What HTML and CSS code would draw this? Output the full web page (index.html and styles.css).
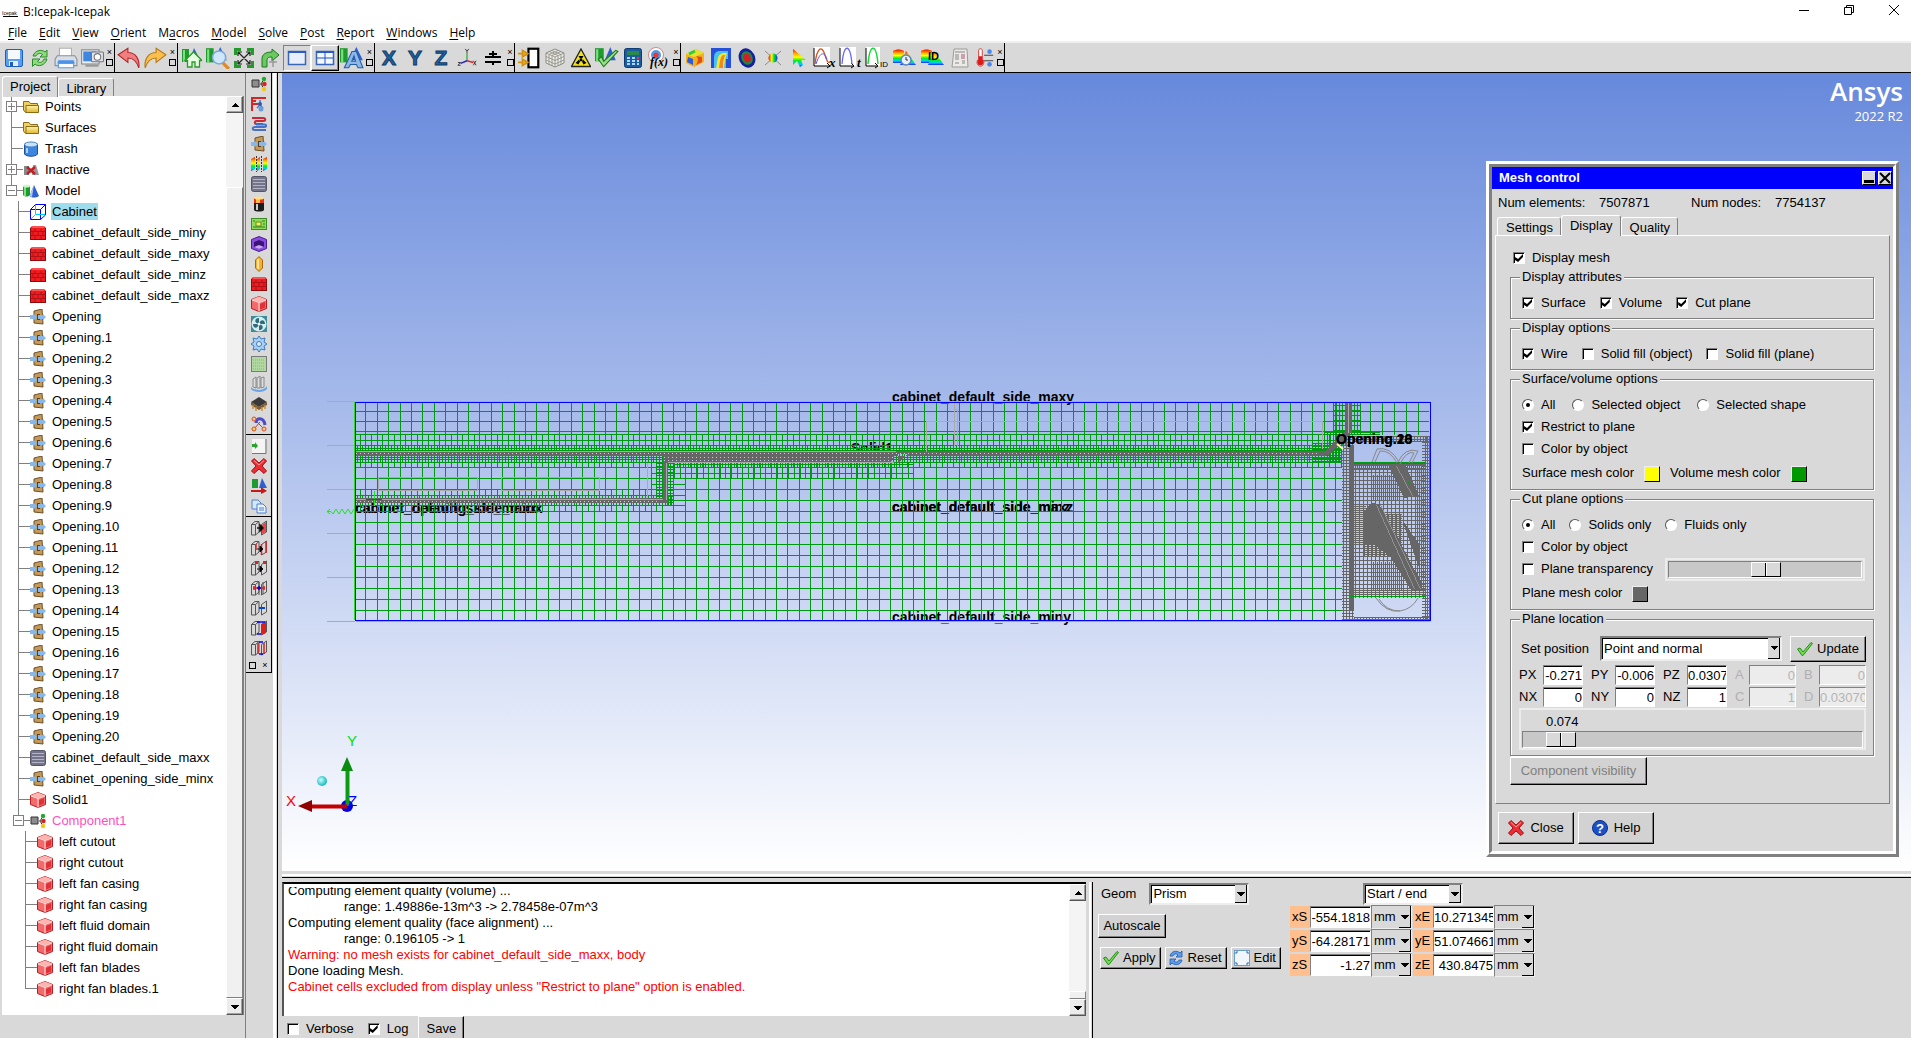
FILE: index.html
```html
<!DOCTYPE html>
<html lang="en">
<head>
<meta charset="utf-8">
<title>B:Icepak-Icepak</title>
<link rel="stylesheet" href="styles.css">
</head>
<body>
<svg class="defs" aria-hidden="true">
  <defs>
    <linearGradient id="g-rain" x1="0" y1="0" x2="0" y2="1"><stop offset="0" stop-color="#f00"/><stop offset=".25" stop-color="#fa0"/><stop offset=".45" stop-color="#ff0"/><stop offset=".65" stop-color="#0e2"/><stop offset=".85" stop-color="#0cf"/><stop offset="1" stop-color="#22f"/></linearGradient>
    <linearGradient id="g-rainx" x1="0" y1="0" x2="1" y2="0"><stop offset="0" stop-color="#f00"/><stop offset=".35" stop-color="#ff0"/><stop offset=".6" stop-color="#0e2"/><stop offset="1" stop-color="#22f"/></linearGradient>
    <linearGradient id="g-folder" x1="0" y1="0" x2="0" y2="1"><stop offset="0" stop-color="#fff3b0"/><stop offset="1" stop-color="#e0b52c"/></linearGradient>
    <radialGradient id="g-ball" cx=".4" cy=".4" r=".6"><stop offset="0" stop-color="#c8ffff"/><stop offset="1" stop-color="#18b8c0"/></radialGradient>
  </defs>

  <symbol id="i-save" viewBox="0 0 20 20"><rect x="1.500" y="1.500" width="17" height="17" rx="1.500" fill="#5b9df0" stroke="#1c5fc4"/><rect x="4" y="2" width="12" height="9" fill="#f4f8ff"/><rect x="5" y="13" width="9" height="5" fill="#e8eef8"/><rect x="6" y="14" width="3" height="4" fill="#1c5fc4"/></symbol>
  <symbol id="i-refresh" viewBox="0 0 20 20"><path d="M3 8C5 2 12 1 15 4L17 2V9H10L12.500 6.500C10 4.500 7 5.500 6 8Z" fill="#8cdc7c" stroke="#2a8a2a"/><path d="M17 11C15 18 8 19 5 16L2.500 18.500V11H10L7.500 13.500C10 15.500 13 14 14 11Z" fill="#8cdc7c" stroke="#2a8a2a"/></symbol>
  <symbol id="i-print" viewBox="0 0 22 20"><path d="M5 1H16V9H5Z" fill="#fff" stroke="#b0b0b0"/><path d="M3 8H19L21 11V17H1V11Z" fill="#d9dde4" stroke="#8b8f98"/><path d="M4 12H18L19 15H3Z" fill="#4a93e8"/><path d="M4 15H18V19H4Z" fill="#f8fbff" stroke="#5a9cec"/></symbol>
  <symbol id="i-camera" viewBox="0 0 22 20"><rect x="1.500" y="2.500" width="16" height="13" fill="#e8eef8" stroke="#888"/><rect x="3" y="4" width="12" height="9" fill="#3f86e0"/><rect x="10.500" y="4.500" width="11" height="9" rx="1" fill="#e2e4e8" stroke="#707680"/><circle cx="16" cy="9" r="3" fill="#fff" stroke="#777"/><path d="M5 17H17" stroke="#999" stroke-width="2"/></symbol>
  <symbol id="i-undo" viewBox="0 0 22 20"><path d="M1 7L10 1V5C17 5 21 11 20 19C18 13 15 10 10 10V14Z" fill="#f08080" stroke="#b02828"/></symbol>
  <symbol id="i-redo" viewBox="0 0 22 20"><path d="M21 7L12 1V5C5 5 1 11 2 19C4 13 7 10 12 10V14Z" fill="#fbc04c" stroke="#b87818"/></symbol>
  <symbol id="i-home" viewBox="0 0 20 20"><path d="M0 1V14H7V1Z" fill="#1e9a2e"/><path d="M2 2V14" stroke="#7ce07c" stroke-width="2"/><path d="M12 0L8 12H18Z" fill="#2f5fd0"/><path d="M3 12.500L11.500 4L20 12.500H17.500V19H13V14H10V19H5.500V12.500Z" fill="#e6ffe0" stroke="#2a9a2a" stroke-width="1.300"/></symbol>
  <symbol id="i-zoom" viewBox="0 0 22 20"><path d="M0 1V14H7V1Z" fill="#1e9a2e"/><path d="M2 2V14" stroke="#7ce07c" stroke-width="2"/><path d="M13 0L8 12H19Z" fill="#2f5fd0"/><path d="M15 14L21 20" stroke="#e08a28" stroke-width="3"/><circle cx="12" cy="9.500" r="6" fill="#cfe6fb" stroke="#7ca8d8" stroke-width="1.400"/></symbol>
  <symbol id="i-fit" viewBox="0 0 20 20"><path d="M0 7V0H7V3H3V7ZM13 0H20V7H17V3H13ZM0 13V20H7V17H3V13ZM20 13V20H13V17H17V13Z" fill="#249a2c"/><path d="M4 4L16 16M16 4L4 16M4 8V4H8M12 4H16V8M4 12V16H8M12 16H16V12" fill="none" stroke="#222" stroke-width="1.200"/></symbol>
  <symbol id="i-turn" viewBox="0 0 20 20"><path d="M2 19V11C2 6 6 4 12 4V1L19 7L12 13V9C8 9 7 10 7 13V19Z" fill="#6cc860" stroke="#1e7a1e"/><path d="M9 14H17M13 12V19" stroke="#999" stroke-width="1.500"/></symbol>
  <symbol id="i-win" viewBox="0 0 20 20"><rect x="1.500" y="3.500" width="17" height="13" fill="#e8eefa" stroke="#3a66b8" stroke-width="1.500"/><path d="M1 4H19" stroke="#2a5cc8" stroke-width="2"/></symbol>
  <symbol id="i-win4" viewBox="0 0 20 20"><rect x="1.500" y="3.500" width="17" height="13" fill="#f4f8ff" stroke="#3a66b8" stroke-width="1.500"/><path d="M1 4H19" stroke="#2a5cc8" stroke-width="2"/><path d="M10 4V16M2 10H18" stroke="#1e4fd0"/></symbol>
  <symbol id="i-modela" viewBox="0 0 22 20"><path d="M0 1V14H7V1Z" fill="#1e9a2e"/><path d="M2 2V14" stroke="#7ce07c" stroke-width="2"/><path d="M15 0L9 12H21Z" fill="#2f5fd0"/><path d="M11 4L4 19H8L9.500 16H15L16.500 19H21L15 4ZM12.800 8L14.300 13H10.800Z" fill="#8fb8e8" stroke="#2060a8"/></symbol>
  <symbol id="i-axes" viewBox="0 0 22 20"><path d="M11 13V5" stroke="#2a2" stroke-width="1.300"/><path d="M11 13L18 15" stroke="#e22" stroke-width="1.600"/><path d="M11 13L4 16" stroke="#22c" stroke-width="1.600"/><path d="M9 0L11 2.500L13 0M11 2.500V5M18 13L21 18M21 13L18 18M1 15H4L1 18H4" fill="none" stroke="#333"/></symbol>
  <symbol id="i-split" viewBox="0 0 20 20"><path d="M2 9H18M2 14H18M10 3V9M10 14V17M6 6H14" stroke="#000" stroke-width="2"/></symbol>
  <symbol id="i-plug" viewBox="0 0 22 20"><rect x="10.500" y="1.500" width="9" height="17" fill="#fff" stroke="#000" stroke-width="2"/><path d="M1 6H5M5 3V9L10 6ZM1 14H5M5 11V17L10 14Z" fill="#f0a818" stroke="#d09010" stroke-width="1.500"/></symbol>
  <symbol id="i-mesh" viewBox="0 0 20 20"><path d="M1 5L10 1L19 5V15L10 19L1 15Z" fill="#ecece6" stroke="#8c8c84"/><path d="M1 5L10 9L19 5M10 9V19M1 8.500L10 12.500L19 8.500M1 12L10 16L19 12M4 6.500V16.500M7 8V18M13 8V18M16 6.500V16.500M4 3.500L13 7.500M7 2.500L16 6.500M16 3.500L7 7.500M13 2.500L4 6.500" fill="none" stroke="#8c8c84" stroke-width=".8"/></symbol>
  <symbol id="i-rad" viewBox="0 0 20 20"><path d="M10 1L19.500 18.500H.5Z" fill="#f2e21c" stroke="#222" stroke-width="1.300"/><circle cx="10" cy="12" r="1.400"/><path d="M7.500 8H12.500L11 10.500H9ZM4.500 15L8 11.500L9 13.500L7.500 16.500ZM15.500 15L12 11.500L11 13.500L12.500 16.500Z"/></symbol>
  <symbol id="i-checkm" viewBox="0 0 22 20"><path d="M0 1V13H8V1Z" fill="#1e9a2e"/><path d="M2 2V13" stroke="#7ce07c" stroke-width="2"/><path d="M14 0L9 12H19Z" fill="#2f5fd0"/><path d="M3 11L8 18L21 4L19 3L8 13L6 9Z" fill="#9be08c" stroke="#1e7a1e"/></symbol>
  <symbol id="i-calc" viewBox="0 0 18 20"><rect x=".5" y=".5" width="17" height="19" rx="2" fill="#1c5c9c" stroke="#0c3c74"/><rect x="3" y="3" width="12" height="4" fill="#2a8a4a"/><path d="M3 10H6M8 10H11M3 13H6M8 13H11M3 16H6M8 16H11M13 13H15M13 16H15" stroke="#a8d8ff" stroke-width="2"/><path d="M13 10H15" stroke="#f33" stroke-width="2"/></symbol>
  <symbol id="i-fx" viewBox="0 0 24 22"><circle cx="9" cy="8" r="7.500" fill="#fff" stroke="#c88"/><circle cx="9" cy="8" r="5" fill="#4c9ce8"/><circle cx="9" cy="8" r="2.500" fill="#e33"/><text x="3" y="19" class="glyph-fx">f(x)</text></symbol>
  <symbol id="i-contour" viewBox="0 0 20 20"><path d="M1 6L11 1L19 5V14L9 19L1 15Z" fill="#f2b01c"/><path d="M3 9L8 11V17L2 14Z" fill="#2a5ce0"/><path d="M1 6L11 1L19 5L9 9Z" fill="#e8e030"/><path d="M11 8C14 10 13 14 11 17L17 14V9Z" fill="#e64a1c"/><path d="M4 6L10 3" stroke="#3c3" stroke-width="3"/></symbol>
  <symbol id="i-plane" viewBox="0 0 20 20"><rect width="20" height="20" fill="#2450dc"/><path d="M3 20V10C3 5 5 3 9 3H17V11H15V20Z" fill="#48c0f4"/><path d="M5 20C7 14 5 7 12 5H16L14 12L13 20Z" fill="#f0e830"/><path d="M8 20C9 14 9 9 12 7H14L12 14V20Z" fill="#f08a20"/></symbol>
  <symbol id="i-iso" viewBox="0 0 20 20"><ellipse cx="10" cy="10" rx="8" ry="10" transform="rotate(-25 10 10)" fill="#16209c"/><ellipse cx="10" cy="10" rx="5.500" ry="7" transform="rotate(-25 10 10)" fill="#1c8c3c"/><ellipse cx="10" cy="10" rx="3.500" ry="4.500" transform="rotate(-25 10 10)" fill="#d81c2c"/></symbol>
  <symbol id="i-point" viewBox="0 0 20 20"><path d="M2 3L18 17M18 3L2 17" stroke="#777" stroke-width=".8"/><circle cx="10" cy="10" r="4.500" fill="url(#g-rainx)"/></symbol>
  <symbol id="i-cursor" viewBox="0 0 20 20"><path d="M4 1V17L8 13L11 19L14 17L12 12H17Z" fill="url(#g-rain)"/></symbol>
  <symbol id="i-plotx" viewBox="0 0 24 22"><rect x="1" width="16" height="19" fill="#fff"/><path d="M1 1V19H17M14 16L17 19L14 21" fill="none" stroke="#000"/><path d="M2 17C4 0 9 -2 12 8S16 15 17 15" fill="none" stroke="#d4501c" stroke-width="1.300"/><path d="M3 17C6 8 10 2 14 12" fill="none" stroke="#55f"/><text x="16" y="20" class="glyph-plot">x</text></symbol>
  <symbol id="i-plott" viewBox="0 0 24 22"><rect x="1" width="16" height="19" fill="#fff"/><path d="M1 1V19H14M12 16L15 19L12 21" fill="none" stroke="#000"/><path d="M3 17C5 -4 11 -4 13 17" fill="none" stroke="#66f" stroke-width="1.300"/><text x="18" y="20" class="glyph-plot">t</text></symbol>
  <symbol id="i-ploti" viewBox="0 0 24 22"><rect x="1" width="14" height="19" fill="#fff"/><path d="M1 1V19H12M10 16L13 19L10 21" fill="none" stroke="#000"/><path d="M3 17C5 -4 11 -4 13 17" fill="none" stroke="#1d3" stroke-width="1.500"/><text x="15" y="20" class="glyph-id">ID</text></symbol>
  <symbol id="i-rtime" viewBox="0 0 24 20"><path d="M1 3C4 1 9 1 12 3V15H1Z" fill="url(#g-rain)"/><path d="M14 3L24 17H8Z" fill="url(#g-rain)"/><circle cx="14" cy="12" r="5" fill="#e4f0fc" stroke="#5a86b8" stroke-width="1.500"/><path d="M14 9V12H16" fill="none" stroke="#333"/></symbol>
  <symbol id="i-rid" viewBox="0 0 24 20"><path d="M1 3C4 1 9 1 12 3V15H1Z" fill="url(#g-rain)"/><path d="M14 3L24 17H8Z" fill="url(#g-rain)"/><text x="8" y="12" class="glyph-idb">ID</text></symbol>
  <symbol id="i-paper" viewBox="0 0 18 20"><path d="M3 1H16L17 19H1Z" fill="#eceae6" stroke="#9a9a98"/><path d="M4 4H14M4 7H8M4 9H8M4 11H8M11 13H14M11 15H14M4 15H8" stroke="#888"/><path d="M10 6H14V11H10Z" fill="#c8a0b0"/></symbol>
  <symbol id="i-thermo" viewBox="0 0 20 22"><path d="M3 3C3 0 7 0 7 3V12C10 14 9 20 5 20S0 14 3 12Z" fill="#fff" stroke="#c33"/><path d="M3 9H7V12C9 14 9 19 5 19S1 14 3 12Z" fill="#e01818"/><path d="M9 8H19M9 14H19" stroke="#444" stroke-width="1.300"/><circle cx="15" cy="4" r="2.500" fill="#4a8af0"/><circle cx="15" cy="18" r="2.500" fill="#4a8af0"/></symbol>

  <symbol id="i-folder" viewBox="0 0 16 16"><path d="M.5 2.500H6L7.500 4.500H14.500V13.500H2.500L.5 11Z" fill="#f0d060" stroke="#8a6c14"/><path d="M3 6.500H15.500V13.500H3Z" fill="url(#g-folder)" stroke="#8a6c14"/></symbol>
  <symbol id="i-trash" viewBox="0 0 16 16"><path d="M1.500 3V13C3 16 13 16 14.500 13V3Z" fill="#3c86e0" stroke="#1c50a0"/><ellipse cx="8" cy="3.500" rx="6.500" ry="2.500" fill="#c8e2fc" stroke="#4a84c8"/><path d="M4 7V12" stroke="#a8d4fc" stroke-width="2"/></symbol>
  <symbol id="i-inactive" viewBox="0 0 16 16"><path d="M1 4H6V13H1Z" fill="#888"/><path d="M10 3H13L16 13H9Z" fill="#999"/><path d="M4 5L12 12M12 5L4 12" stroke="#c41c24" stroke-width="2.500"/></symbol>
  <symbol id="i-modelt" viewBox="0 0 16 16"><path d="M0 3V12C2 14 5 14 7 12V3Z" fill="#1e9a2e"/><path d="M2 4V13" stroke="#7ce07c" stroke-width="2"/><ellipse cx="3.500" cy="3" rx="3.500" ry="1.500" fill="#c8f8c8"/><path d="M11 2L6.500 13C9 15 13 15 16 13Z" fill="#2f5fd0"/><path d="M11 2L9 14L6.500 13Z" fill="#a8c8fa"/></symbol>
  <symbol id="i-cabinet" viewBox="0 0 16 16"><path d="M.5 5.500H10.500V15.500H.5ZM.5 5.500L5.500 .5H15.500L10.500 5.500M15.500 .5V11L10.500 15.500" fill="none" stroke="#00f"/><path d="M5.500 1V10.500H15M5.500 10.500L1 15" fill="none" stroke="#0cf"/></symbol>
  <symbol id="i-wall" viewBox="0 0 16 16"><path d="M2 1H14L16 3V15H0V3Z" fill="#f01c20"/><path d="M0 6.500H16M0 10.500H16M5 4V6M11 4V6M3 7V10M8 7V10M13 7V10M5 11V14M11 11V14" stroke="#a01014" stroke-width=".8" fill="none"/><path d="M0 14.500H16M.5 3V15M15.500 3V15" stroke="#8c0c10" fill="none"/><path d="M2 2H14" stroke="#ff8a8a"/></symbol>
  <symbol id="i-opening" viewBox="0 0 16 16"><path d="M4 2L12 0L13 15L4 14Z" fill="#c49a5c" stroke="#6e4e22"/><path d="M7 5H10V11H7Z" fill="#5a4020"/><path d="M0 6H4V5L7 8L4 11V10H0ZM8 6H13V5L16 8L13 11V10H8Z" fill="#86b8ec"/></symbol>
  <symbol id="i-solid" viewBox="0 0 16 16"><path d="M.5 3.500L8 .5L15.500 3.500V12.500L8 15.500L.5 12.500Z" fill="#f26a6a" stroke="#b81c24"/><path d="M.5 3.500L8 6L15.500 3.500L8 .5Z" fill="#ffb4b0"/><path d="M8 6V15.500M1 4L8 6.500L15 4" fill="none" stroke="#ffe0e0"/><path d="M9 8L14 6V11.500L9 13.500Z" fill="#e03038"/></symbol>
  <symbol id="i-vent" viewBox="0 0 16 16"><rect x=".5" y=".5" width="15" height="15" rx="2" fill="#74748a" stroke="#55556a"/><path d="M2 3.500H14M2 6.500H14M2 9.500H14M2 12.500H14" stroke="#b4b4c4"/></symbol>
  <symbol id="i-assembly" viewBox="0 0 16 16"><path d="M1 4H8V11H1Z" fill="#8c8c8c" stroke="#333"/><path d="M9 8H11M14 3L11 6V10L14 13" fill="none" stroke="#333"/><circle cx="13" cy="3" r="2.200" fill="#1cac2c"/><circle cx="13.500" cy="8" r="2.200" fill="#e02020"/><circle cx="13" cy="13" r="2.200" fill="#f0c818"/></symbol>
  <symbol id="i-network" viewBox="0 0 16 16"><path d="M1 15V2H15M2 5H5M2 8H8" fill="none" stroke="#d82424" stroke-width="2"/><path d="M9 4V9M9 9L12 12M9 9L6 12" stroke="#4a7cc8" stroke-width="1.500"/><circle cx="9" cy="8" r="2" fill="#2a5cb0"/><circle cx="10" cy="13" r="2.500" fill="#6a9ce0"/></symbol>
  <symbol id="i-coil" viewBox="0 0 16 16"><path d="M1 2H12C15 2 15 5 12 5H6C3 5 3 8 6 8H12" fill="none" stroke="#c82838" stroke-width="2"/><path d="M5 8.500H13C16 8.500 16 11 13 11H4C1 11 1 14 4 14H15" fill="none" stroke="#4870c8" stroke-width="2"/></symbol>
  <symbol id="i-radiation" viewBox="0 0 16 16"><path d="M0 3L4 1V13L0 15ZM6 3L9 1V13L6 15ZM12 3L16 1V13L12 15Z" fill="url(#g-rain)"/><path d="M5.500 0V16M10.500 0V16" stroke="#333" stroke-dasharray="2 1"/></symbol>
  <symbol id="i-source" viewBox="0 0 16 16"><path d="M3 2V14C4 16 12 16 13 14V2Z" fill="#1c1c1c"/><path d="M3 2V7H13V2Z" fill="#e43418"/><path d="M5 2V7H9V2Z" fill="#ffc040"/><ellipse cx="8" cy="2" rx="5" ry="1.500" fill="#ffe088"/><path d="M6 8V14" stroke="#ccc" stroke-width="2"/></symbol>
  <symbol id="i-pcb" viewBox="0 0 16 16"><rect x=".5" y="2.500" width="15" height="11" fill="#8cdc5c" stroke="#3c8c20"/><rect x="5" y="6" width="5" height="4" fill="#e8f060" stroke="#688818"/><path d="M2 5H4M11 5H14M2 11H14M12 8H14" stroke="#347c1c"/></symbol>
  <symbol id="i-enclosure" viewBox="0 0 16 16"><path d="M.5 3.500L8 .5L15.500 3.500V12.500L8 15.500L.5 12.500Z" fill="#8a4ce0" stroke="#4c1c98"/><path d="M3 6L8 4L13 6V11L8 13L3 11Z" fill="#3c1478"/><path d="M3 11L8 9L13 11L8 13Z" fill="#c8a4f4"/></symbol>
  <symbol id="i-plate" viewBox="0 0 16 16"><path d="M8 .5L11.500 4V12L8 15.500L4.500 12V4Z" fill="#f8b030" stroke="#a86810"/><path d="M7 3V13" stroke="#ffe4a0" stroke-width="2"/></symbol>
  <symbol id="i-fan" viewBox="0 0 16 16"><rect width="16" height="16" fill="#3c8c98"/><circle cx="8" cy="8" r="7.500" fill="#d8ecf0"/><path d="M8 8C3 7 3 2 8 2ZM8 8C9 3 14 3 14 8ZM8 8C13 9 13 14 8 14ZM8 8C7 13 2 13 2 8Z" fill="#2c6c7c"/><circle cx="8" cy="8" r="1.500" fill="#fff"/></symbol>
  <symbol id="i-blower" viewBox="0 0 16 16"><path d="M8 0L10 3L14 2L13 6L16 8L13 10L14 14L10 13L8 16L6 13L2 14L3 10L0 8L3 6L2 2L6 3Z" fill="#a8d0f4" stroke="#3c7cc0"/><circle cx="8" cy="8" r="2.500" fill="#e8e8e8" stroke="#3c7cc0"/></symbol>
  <symbol id="i-resist" viewBox="0 0 16 16"><rect x=".5" y=".5" width="15" height="15" fill="#b0d8a0" stroke="#7a7a7a"/><path d="M2 4H14M2 7H14M2 10H14M2 13H14" stroke="#88b478" stroke-dasharray="1 1"/></symbol>
  <symbol id="i-sink" viewBox="0 0 16 16"><path d="M2 3L5 1V12L2 11ZM6 2L9 0V12H6ZM10 2L13 1V11L10 12Z" fill="#ddd" stroke="#888"/><path d="M0 11C3 15 13 15 16 10V13C13 17 3 17 0 13Z" fill="#6aa4e8"/></symbol>
  <symbol id="i-package" viewBox="0 0 16 16"><path d="M0 6L8 1L16 6L8 11Z" fill="#3a3a3a"/><path d="M0 6L8 11V14L0 9ZM16 6L8 11V14L16 9Z" fill="#7c5c30"/><path d="M2 9V13M5 11V15M11 11V15M14 9V13" stroke="#c8903c" stroke-width="1.500"/></symbol>
  <symbol id="i-tri" viewBox="0 0 16 16"><path d="M3 3L8 8L13 13M3 13L9 6" stroke="#c83c2c"/><path d="M5 7C5 1 13 1 14 9" fill="none" stroke="#4c4cc8" stroke-width="3"/><circle cx="3" cy="3" r="2" fill="#ffc8a0" stroke="#d84c20"/><circle cx="3" cy="13" r="2" fill="#ffd060" stroke="#d84c20"/><circle cx="13" cy="13" r="2" fill="#ffc8a0" stroke="#d84c20"/></symbol>
  <symbol id="i-new" viewBox="0 0 16 16"><path d="M1 1H14V15H1Z" fill="#f4f4f4"/><path d="M15 1V15.500H1" fill="none" stroke="#777"/><path d="M1 6H4V4L7 8L4 11V9H1Z" fill="#28a428"/></symbol>
  <symbol id="i-x" viewBox="0 0 16 16"><path d="M3 .5L8 5L13 .5L15.500 3L11 8L15.500 13L13 15.500L8 11L3 15.500L.5 13L5 8L.5 3Z" fill="#ee2c34" stroke="#a01018"/><path d="M3 2.500L8 7L13 2.500" fill="none" stroke="#ff9c98"/></symbol>
  <symbol id="i-move" viewBox="0 0 16 16"><path d="M1 1V10H7V1Z" fill="#1e9a2e"/><path d="M11 0L8 10H16Z" fill="#2f5fd0"/><path d="M0 12H10V9L16 13L10 16V14H0Z" fill="#c81818"/></symbol>
  <symbol id="i-copy" viewBox="0 0 16 16"><path d="M1 2H7L10 5V11H1Z" fill="#d8e8fc" stroke="#4c80c8"/><path d="M6 6H12L15 9V15H6Z" fill="#e8f2ff" stroke="#4c80c8"/><path d="M8 10H13M8 12H13" stroke="#4c80c8"/></symbol>
  <symbol id="i-box" viewBox="0 0 16 16"><path d="M.5 4.500L4 1.500H8V12L4.500 15H.5ZM4.500 4.500V15M.5 4.500H4.500L8 1.500M10.500 4.500L15.500 1V12L10.500 15Z" fill="#d8d8d8" stroke="#555"/></symbol>
  <symbol id="i-al1" viewBox="0 0 16 16"><use href="#i-box" width="16" height="16"/><path d="M11 5L15 2V12L11 14Z" fill="#e84848"/><path d="M6 8H10M9 5L12 8L9 11Z" stroke="#111" stroke-width="1.500"/></symbol>
  <symbol id="i-al2" viewBox="0 0 16 16"><use href="#i-box" width="16" height="16"/><path d="M15 1V13M10.500 4V15M5 4V10" stroke="#e02020" stroke-width="1.500"/><path d="M6 9H10M9 6L12 9L9 12Z" stroke="#111"/></symbol>
  <symbol id="i-al3" viewBox="0 0 16 16"><use href="#i-box" width="16" height="16"/><path d="M4 1H7V4H4ZM12 1H15V4H12Z" fill="#e02020"/><path d="M6 9H10M9 6L12 9L9 12Z" stroke="#111"/></symbol>
  <symbol id="i-al4" viewBox="0 0 16 16"><use href="#i-box" width="16" height="16"/><path d="M8 2V15M12 2V14" stroke="#555"/><path d="M2 8H14M3 6V10M13 6V10" stroke="#e02020" stroke-width="1.500"/><path d="M8 6V10M6 8H10" stroke="#00c" stroke-width="1.500"/></symbol>
  <symbol id="i-al5" viewBox="0 0 16 16"><use href="#i-box" width="16" height="16"/><path d="M8 8H14" stroke="#04d" stroke-width="2"/></symbol>
  <symbol id="i-al6" viewBox="0 0 16 16"><use href="#i-box" width="16" height="16"/><path d="M10 4L15 2V13L10 15Z" fill="#e01c1c"/><path d="M6 2H14M6 14H10" stroke="#00f" stroke-width="1.500"/></symbol>
  <symbol id="i-al7" viewBox="0 0 16 16"><use href="#i-box" width="16" height="16"/><path d="M7 3V14M13 3V14" stroke="#e01c1c" stroke-width="1.500"/><path d="M8 2H12M8 14H12" stroke="#00f" stroke-width="1.500"/></symbol>
  <symbol id="i-tick" viewBox="0 0 16 14"><path d="M.5 7L3 6L6 10L14 .5L15.500 1.500L6 13.500H5Z" fill="#6ce04c" stroke="#2a8a1c"/></symbol>
  <symbol id="i-help" viewBox="0 0 16 16"><circle cx="8" cy="8" r="7.500" fill="#1c50c8" stroke="#0c2c88"/><text x="8" y="13" text-anchor="middle" class="glyph-help">?</text></symbol>
  <symbol id="i-reset" viewBox="0 0 16 16"><path d="M2 6C3 1 9 0 12 3L14 1V7H8L10 5C8 3 6 4 5 6ZM14 10C13 15 7 16 4 13L2 15V9H8L6 11C8 13 10 12 11 10Z" fill="#5c9cec" stroke="#2058a8" stroke-width=".8"/></symbol>
  <symbol id="i-edit" viewBox="0 0 16 16"><rect x=".5" y=".5" width="15" height="15" fill="#f0f6fc" stroke="#6a9ccc"/><path d="M2 4V2H4M12 2H14V4M14 12V14H12M4 14H2V12" fill="none" stroke="#2a6cac"/></symbol>
</svg>

<header class="titlebar">
  <svg class="app-icon" width="20" height="12" aria-hidden="true"><text x="1" y="9" class="glyph-app">Icepak</text><path d="M2 10.500H17" stroke="#000"/></svg>
  <h1>B:Icepak-Icepak</h1>
  <div class="window-buttons">
    <button aria-label="Minimize"><svg width="10" height="10"><path d="M0 5.500H10" stroke="#000"/></svg></button>
    <button aria-label="Restore"><svg width="10" height="10"><path d="M.5 2.500H7.500V9.500H.5ZM2.500 2V.5H9.500V7.500H8" fill="none" stroke="#000"/></svg></button>
    <button aria-label="Close"><svg width="10" height="10"><path d="M0 0L10 10M10 0L0 10" stroke="#000"/></svg></button>
  </div>
</header>

<nav class="menubar">
  <button><u>F</u>ile</button><button><u>E</u>dit</button><button><u>V</u>iew</button><button><u>O</u>rient</button><button>M<u>a</u>cros</button><button><u>M</u>odel</button><button><u>S</u>olve</button><button><u>P</u>ost</button><button><u>R</u>eport</button><button><u>W</u>indows</button><button><u>H</u>elp</button>
</nav>

<div class="toolbar">
  <div class="tool-group">
    <button aria-label="Save"><svg><use href="#i-save"/></svg></button>
    <button aria-label="Refresh"><svg><use href="#i-refresh"/></svg></button>
    <button aria-label="Print"><svg class="big"><use href="#i-print"/></svg></button>
    <button aria-label="Capture image"><svg class="big"><use href="#i-camera"/></svg></button>
    <span class="grip loose"></span>
  </div>
  <div class="tool-group">
    <button aria-label="Undo"><svg class="big"><use href="#i-undo"/></svg></button>
    <button aria-label="Redo"><svg class="big"><use href="#i-redo"/></svg></button>
    <span class="grip loose"></span>
  </div>
  <div class="tool-group">
    <button aria-label="Home view"><svg><use href="#i-home"/></svg></button>
    <button aria-label="Zoom"><svg class="big"><use href="#i-zoom"/></svg></button>
    <button aria-label="Scale to fit"><svg><use href="#i-fit"/></svg></button>
    <button aria-label="Rotate"><svg><use href="#i-turn"/></svg></button>
    <button class="wide pressed" aria-label="One view"><svg><use href="#i-win"/></svg></button>
    <button class="wide raised" aria-label="Four views"><svg><use href="#i-win4"/></svg></button>
    <button aria-label="Object names"><svg class="big"><use href="#i-modela"/></svg></button>
    <span class="grip loose"></span>
  </div>
  <div class="tool-group">
    <button class="letter">X</button>
    <button class="letter">Y</button>
    <button class="letter">Z</button>
    <button aria-label="Isometric"><svg><use href="#i-axes"/></svg></button>
    <button aria-label="Reverse"><svg><use href="#i-split"/></svg></button>
    <span class="grip"></span>
  </div>
  <div class="tool-group">
    <button aria-label="Power and temperature"><svg class="big"><use href="#i-plug"/></svg></button>
    <button aria-label="Generate mesh"><svg><use href="#i-mesh"/></svg></button>
    <button aria-label="Radiation"><svg><use href="#i-rad"/></svg></button>
    <button aria-label="Check model"><svg class="big"><use href="#i-checkm"/></svg></button>
    <button aria-label="Run solution"><svg><use href="#i-calc"/></svg></button>
    <button aria-label="Optimization"><svg class="big"><use href="#i-fx"/></svg></button>
    <span class="grip"></span>
  </div>
  <div class="tool-group">
    <button aria-label="Object face"><svg><use href="#i-contour"/></svg></button>
    <button aria-label="Plane cut"><svg><use href="#i-plane"/></svg></button>
    <button aria-label="Isosurface"><svg><use href="#i-iso"/></svg></button>
    <button aria-label="Point"><svg><use href="#i-point"/></svg></button>
    <button aria-label="Surface probe"><svg><use href="#i-cursor"/></svg></button>
    <button aria-label="Variation plot"><svg class="big"><use href="#i-plotx"/></svg></button>
    <button aria-label="History plot"><svg class="big"><use href="#i-plott"/></svg></button>
    <button aria-label="Trials plot"><svg class="big"><use href="#i-ploti"/></svg></button>
    <button class="wide" aria-label="Transient settings"><svg class="big"><use href="#i-rtime"/></svg></button>
    <button class="wide" aria-label="Load solution ID"><svg class="big"><use href="#i-rid"/></svg></button>
    <button class="wide" aria-label="Summary report"><svg><use href="#i-paper"/></svg></button>
    <button class="narrow" aria-label="Power and temperature values"><svg><use href="#i-thermo"/></svg></button>
    <span class="grip"></span>
  </div>
</div>

<div class="workspace">
  <aside class="project">
    <div class="tabs" role="tablist">
      <button class="tab active" role="tab">Project</button><button class="tab" role="tab">Library</button>
    </div>
    <div class="tree-frame">
      <ul class="tree">
        <li><button class="knob plus" aria-label="Expand"></button><div class="row"><svg><use href="#i-folder"/></svg><span>Points</span></div></li>
        <li><div class="row"><svg><use href="#i-folder"/></svg><span>Surfaces</span></div></li>
        <li><div class="row"><svg><use href="#i-trash"/></svg><span>Trash</span></div></li>
        <li><button class="knob plus" aria-label="Expand"></button><div class="row"><svg><use href="#i-inactive"/></svg><span>Inactive</span></div></li>
        <li><button class="knob" aria-label="Collapse"></button><div class="row"><svg><use href="#i-modelt"/></svg><span>Model</span></div>
          <ul>
            <li><div class="row"><svg><use href="#i-cabinet"/></svg><span class="selected">Cabinet</span></div></li>
            <li><div class="row"><svg><use href="#i-wall"/></svg><span>cabinet_default_side_miny</span></div></li>
            <li><div class="row"><svg><use href="#i-wall"/></svg><span>cabinet_default_side_maxy</span></div></li>
            <li><div class="row"><svg><use href="#i-wall"/></svg><span>cabinet_default_side_minz</span></div></li>
            <li><div class="row"><svg><use href="#i-wall"/></svg><span>cabinet_default_side_maxz</span></div></li>
            <li><div class="row"><svg><use href="#i-opening"/></svg><span>Opening</span></div></li>
            <li><div class="row"><svg><use href="#i-opening"/></svg><span>Opening.1</span></div></li>
            <li><div class="row"><svg><use href="#i-opening"/></svg><span>Opening.2</span></div></li>
            <li><div class="row"><svg><use href="#i-opening"/></svg><span>Opening.3</span></div></li>
            <li><div class="row"><svg><use href="#i-opening"/></svg><span>Opening.4</span></div></li>
            <li><div class="row"><svg><use href="#i-opening"/></svg><span>Opening.5</span></div></li>
            <li><div class="row"><svg><use href="#i-opening"/></svg><span>Opening.6</span></div></li>
            <li><div class="row"><svg><use href="#i-opening"/></svg><span>Opening.7</span></div></li>
            <li><div class="row"><svg><use href="#i-opening"/></svg><span>Opening.8</span></div></li>
            <li><div class="row"><svg><use href="#i-opening"/></svg><span>Opening.9</span></div></li>
            <li><div class="row"><svg><use href="#i-opening"/></svg><span>Opening.10</span></div></li>
            <li><div class="row"><svg><use href="#i-opening"/></svg><span>Opening.11</span></div></li>
            <li><div class="row"><svg><use href="#i-opening"/></svg><span>Opening.12</span></div></li>
            <li><div class="row"><svg><use href="#i-opening"/></svg><span>Opening.13</span></div></li>
            <li><div class="row"><svg><use href="#i-opening"/></svg><span>Opening.14</span></div></li>
            <li><div class="row"><svg><use href="#i-opening"/></svg><span>Opening.15</span></div></li>
            <li><div class="row"><svg><use href="#i-opening"/></svg><span>Opening.16</span></div></li>
            <li><div class="row"><svg><use href="#i-opening"/></svg><span>Opening.17</span></div></li>
            <li><div class="row"><svg><use href="#i-opening"/></svg><span>Opening.18</span></div></li>
            <li><div class="row"><svg><use href="#i-opening"/></svg><span>Opening.19</span></div></li>
            <li><div class="row"><svg><use href="#i-opening"/></svg><span>Opening.20</span></div></li>
            <li><div class="row"><svg><use href="#i-vent"/></svg><span>cabinet_default_side_maxx</span></div></li>
            <li><div class="row"><svg><use href="#i-opening"/></svg><span>cabinet_opening_side_minx</span></div></li>
            <li><div class="row"><svg><use href="#i-solid"/></svg><span>Solid1</span></div></li>
            <li><button class="knob" aria-label="Collapse"></button><div class="row"><svg><use href="#i-assembly"/></svg><span class="pink">Component1</span></div>
              <ul>
                <li><div class="row"><svg><use href="#i-solid"/></svg><span>left cutout</span></div></li>
                <li><div class="row"><svg><use href="#i-solid"/></svg><span>right cutout</span></div></li>
                <li><div class="row"><svg><use href="#i-solid"/></svg><span>left fan casing</span></div></li>
                <li><div class="row"><svg><use href="#i-solid"/></svg><span>right fan casing</span></div></li>
                <li><div class="row"><svg><use href="#i-solid"/></svg><span>left fluid domain</span></div></li>
                <li><div class="row"><svg><use href="#i-solid"/></svg><span>right fluid domain</span></div></li>
                <li><div class="row"><svg><use href="#i-solid"/></svg><span>left fan blades</span></div></li>
                <li><div class="row"><svg><use href="#i-solid"/></svg><span>right fan blades.1</span></div></li>
              </ul>
            </li>
          </ul>
        </li>
      </ul>
      <div class="scrollbar"><button class="up" aria-label="Scroll up"></button><div class="trough tree-trough"><div class="thumb"></div></div><button class="down" aria-label="Scroll down"></button></div>
    </div>
  </aside>

  <div class="object-bar">
    <div class="object-tools">
      <div class="object-group">
        <button aria-label="Assembly"><svg><use href="#i-assembly"/></svg></button>
        <button aria-label="Network"><svg><use href="#i-network"/></svg></button>
        <button aria-label="Heat exchanger"><svg><use href="#i-coil"/></svg></button>
        <button aria-label="Opening"><svg><use href="#i-opening"/></svg></button>
        <button aria-label="Periodic boundary"><svg><use href="#i-radiation"/></svg></button>
        <button aria-label="Grille"><svg><use href="#i-vent"/></svg></button>
        <button aria-label="Source"><svg><use href="#i-source"/></svg></button>
        <button aria-label="Printed circuit board"><svg><use href="#i-pcb"/></svg></button>
        <button aria-label="Enclosure"><svg><use href="#i-enclosure"/></svg></button>
        <button aria-label="Plate"><svg><use href="#i-plate"/></svg></button>
        <button aria-label="Wall"><svg><use href="#i-wall"/></svg></button>
        <button aria-label="Block"><svg><use href="#i-solid"/></svg></button>
        <button aria-label="Fan"><svg><use href="#i-fan"/></svg></button>
        <button aria-label="Blower"><svg><use href="#i-blower"/></svg></button>
        <button aria-label="Resistance"><svg><use href="#i-resist"/></svg></button>
        <button aria-label="Heat sink"><svg><use href="#i-sink"/></svg></button>
        <button aria-label="Package"><svg><use href="#i-package"/></svg></button>
        <button aria-label="Materials"><svg><use href="#i-tri"/></svg></button>
      </div>
      <div class="object-group">
        <button aria-label="Edit object"><svg><use href="#i-new"/></svg></button>
        <button aria-label="Delete object"><svg><use href="#i-x"/></svg></button>
        <button aria-label="Move object"><svg><use href="#i-move"/></svg></button>
        <button aria-label="Copy object"><svg><use href="#i-copy"/></svg></button>
      </div>
      <div class="object-group">
        <button aria-label="Align faces"><svg><use href="#i-al1"/></svg></button>
        <button aria-label="Align edges"><svg><use href="#i-al2"/></svg></button>
        <button aria-label="Align vertices"><svg><use href="#i-al3"/></svg></button>
        <button aria-label="Align centers"><svg><use href="#i-al4"/></svg></button>
        <button aria-label="Align face centers"><svg><use href="#i-al5"/></svg></button>
        <button aria-label="Morph faces"><svg><use href="#i-al6"/></svg></button>
        <button aria-label="Morph edges"><svg><use href="#i-al7"/></svg></button>
        <span class="grip flat"></span>
      </div>
    </div>
  </div>
  <div class="vsplit"></div>

  <main class="main">
    <section class="viewport" aria-label="Graphics">
      <svg class="scene">
        <g transform="translate(-282 -73)">
          <path d="M327 401.500H355M327 445.500H355M327 489.500H355M327 533.500H355M327 577.500H355M327 621.500H355" stroke="#aaa"/>
          <g class="labels">
            <text x="892" y="402">cabinet_default_side_maxy</text>
            <text x="892" y="512">cabinet_default_side_minz</text>
            <text x="892" y="512">cabinet_default_side_maxz</text>
            <text x="892" y="622">cabinet_default_side_miny</text>
            <text x="355" y="513">cabinet_default_side_maxx</text>
            <text x="355" y="513">cabinet_opening_side_minx</text>
            <text x="851" y="453">Solid1</text>
          </g>
          <g id="mesh" shape-rendering="crispEdges"></g>
          <g fill="none" stroke="#aaa" shape-rendering="crispEdges">
            <path d="M378.500 477.500H477.500V490.500H378.500ZM501.500 477.500H599.500V490.500H501.500ZM647.500 463V497M356 401.500H1430M356 621.500H1430M926.500 452V421.500H1322.500V449M954.500 403V446M957.500 446V409.500H954"/>
          </g>
          <g fill="none" stroke="#888">
            <path d="M1372 462L1377 449Q1390 446 1399 462M1375 462L1380 451Q1390 450 1397 463M1398 462Q1405 447 1418 451L1412 463M1400 464Q1407 450 1414 453L1409 463M1376 598Q1386 613 1400 611Q1412 609 1418 598M1379 599Q1386 611 1400 611"/>
          </g>
          <g class="labels">
            <text x="1336" y="444">Opening.20</text>
            <text x="1336" y="444">Opening.18</text>
          </g>
          <path d="M355.500 402.500H1430.500V620.500H355.500Z" fill="none" stroke="#00f" shape-rendering="crispEdges"/>
          <path d="M354.500 402V620M374.500 491V506M327 511.500H331L333 514L336 509L339 514L342 509L345 514L348 509L351 514L354 509M330 509L327 511.500L330 514" fill="none" class="trace"/>
          <path d="M366 499.500H382" stroke="#f00"/>
          <path d="M1337 444L1343 449" stroke="#ffffa0" stroke-width="2"/>

          <circle cx="347" cy="806" r="6" fill="#0000e8"/>
          <path d="M345.500 806V770H349.500V806Z" fill="#0c9c14"/>
          <path d="M347 757L353 771H341Z" fill="#0a8c10"/>
          <path d="M347 804.500H312V808.500H347Z" fill="#c40000"/>
          <path d="M298 806L312 800V812Z" fill="#900000"/>
          <circle cx="322" cy="781" r="5" fill="url(#g-ball)"/>
          <text x="347" y="746" class="axis" fill="#00e000">Y</text>
          <text x="286" y="806" class="axis" fill="#f00">X</text>
          <text x="348" y="806" class="axis" fill="#00f">Z</text>
        </g>
      </svg>
      <div class="brand"><strong>Ansys</strong><span>2022 R2</span></div>

      <form class="dialog" aria-label="Mesh control">
        <div class="dialog-inner">
          <div class="dialog-title">
            <h2>Mesh control</h2>
            <button type="button" aria-label="Minimize"><svg width="12" height="12"><path d="M1 9.500H11" stroke="#000" stroke-width="3"/></svg></button>
            <button type="button" aria-label="Close"><svg width="12" height="12"><path d="M1 1L11 11M11 1L1 11" stroke="#000" stroke-width="2"/></svg></button>
          </div>
          <div class="counts"><span>Num elements:</span><span>7507871</span><span>Num nodes:</span><span>7754137</span></div>
          <div class="tabs" role="tablist">
            <button type="button" class="tab" role="tab">Settings</button><button type="button" class="tab active" role="tab">Display</button><button type="button" class="tab" role="tab">Quality</button>
          </div>
          <div class="panel">
            <label class="opt first"><input type="checkbox" checked>Display mesh</label>
            <fieldset>
              <legend>Display attributes</legend>
              <div class="opts"><label class="opt"><input type="checkbox" checked>Surface</label><label class="opt"><input type="checkbox" checked>Volume</label><label class="opt"><input type="checkbox" checked>Cut plane</label></div>
            </fieldset>
            <fieldset>
              <legend>Display options</legend>
              <div class="opts"><label class="opt"><input type="checkbox" checked>Wire</label><label class="opt"><input type="checkbox">Solid fill (object)</label><label class="opt"><input type="checkbox">Solid fill (plane)</label></div>
            </fieldset>
            <fieldset>
              <legend>Surface/volume options</legend>
              <div class="opts radios"><label class="opt"><input type="radio" name="sv" checked>All</label><label class="opt"><input type="radio" name="sv">Selected object</label><label class="opt"><input type="radio" name="sv">Selected shape</label></div>
              <div class="opts"><label class="opt"><input type="checkbox" checked>Restrict to plane</label></div>
              <div class="opts"><label class="opt"><input type="checkbox">Color by object</label></div>
              <div class="opts colors"><span>Surface mesh color</span><button type="button" class="swatch yellow" aria-label="Surface mesh color"></button><span>Volume mesh color</span><button type="button" class="swatch green" aria-label="Volume mesh color"></button></div>
            </fieldset>
            <fieldset>
              <legend>Cut plane options</legend>
              <div class="opts"><label class="opt"><input type="radio" name="cp" checked>All</label><label class="opt"><input type="radio" name="cp">Solids only</label><label class="opt"><input type="radio" name="cp">Fluids only</label></div>
              <div class="opts"><label class="opt"><input type="checkbox">Color by object</label></div>
              <div class="opts transparency"><label class="opt"><input type="checkbox">Plane transparency</label><span class="slider"><input type="range" min="0" max="1" step="0.001" value="0.506" aria-label="Transparency"></span></div>
              <div class="opts colors"><span>Plane mesh color</span><button type="button" class="swatch gray" aria-label="Plane mesh color"></button></div>
            </fieldset>
            <fieldset class="location">
              <legend>Plane location</legend>
              <div class="position"><label for="setpos">Set position</label><span class="select"><select id="setpos"><option>Point and normal</option></select></span><button type="button" class="btn"><svg><use href="#i-tick"/></svg>Update</button></div>
              <div class="coords">
                <label for="px">PX</label><input id="px" value="-0.271"><label for="py">PY</label><input id="py" value="-0.006"><label for="pz">PZ</label><input id="pz" class="long" value="0.0307"><label for="pa" class="off">A</label><input id="pa" value="0" disabled><label for="pb" class="off">B</label><input id="pb" value="0" disabled>
                <label for="nx">NX</label><input id="nx" value="0"><label for="ny">NY</label><input id="ny" value="0"><label for="nz">NZ</label><input id="nz" value="1"><label for="pc" class="off">C</label><input id="pc" value="1" disabled><label for="pd" class="off">D</label><input id="pd" class="long" value="0.03070" disabled>
              </div>
              <div class="slider tall"><output for="plane">0.074</output><input id="plane" type="range" min="0" max="1" step="0.001" value="0.076" aria-label="Plane position"></div>
            </fieldset>
            <button type="button" class="btn visibility" disabled>Component visibility</button>
          </div>
          <div class="dialog-buttons"><button type="button" class="btn"><svg><use href="#i-x"/></svg>Close</button><button type="button" class="btn"><svg><use href="#i-help"/></svg>Help</button></div>
        </div>
      </form>
    </section>
    <div class="hsplit"></div>
    <div class="bottom">
      <section class="messages">
        <div class="log-frame">
          <div class="log">
            <p>Computing element quality (volume) ...</p>
            <p class="indent">range: 1.49886e-13m^3 -&gt; 2.78458e-07m^3</p>
            <p>Computing element quality (face alignment) ...</p>
            <p class="indent">range: 0.196105 -&gt; 1</p>
            <p class="warn">Warning: no mesh exists for cabinet_default_side_maxx, body</p>
            <p>Done loading Mesh.</p>
            <p class="warn">Cabinet cells excluded from display unless "Restrict to plane" option is enabled.</p>
          </div>
          <div class="scrollbar"><button class="up" aria-label="Scroll up"></button><div class="trough log-trough"><div class="thumb"></div></div><button class="down" aria-label="Scroll down"></button></div>
        </div>
        <div class="log-actions"><label class="opt"><input type="checkbox">Verbose</label><label class="opt"><input type="checkbox" checked>Log</label><button class="btn">Save</button></div>
      </section>
      <div class="vsplit"></div>
      <section class="geometry">
        <div class="geom-left">
          <div class="geom-row"><label for="geom">Geom</label><span class="select"><select id="geom"><option>Prism</option></select></span></div>
          <button class="btn autoscale">Autoscale</button>
          <div class="geom-actions"><button class="btn"><svg><use href="#i-tick"/></svg>Apply</button><button class="btn"><svg><use href="#i-reset"/></svg>Reset</button><button class="btn"><svg><use href="#i-edit"/></svg>Edit</button></div>
        </div>
        <div class="geom-right">
          <span class="select"><select aria-label="Coordinates"><option>Start / end</option></select></span>
          <div class="extents">
            <label for="xs">xS</label><input id="xs" value="-554.1818"><span class="select unit"><select aria-label="xS unit"><option>mm</option></select></span>
            <label for="xe">xE</label><input id="xe" class="long" value="10.271345"><span class="select unit"><select aria-label="xE unit"><option>mm</option></select></span>
            <label for="ys">yS</label><input id="ys" value="-64.28171"><span class="select unit"><select aria-label="yS unit"><option>mm</option></select></span>
            <label for="ye">yE</label><input id="ye" class="long" value="51.074661"><span class="select unit"><select aria-label="yE unit"><option>mm</option></select></span>
            <label for="zs">zS</label><input id="zs" value="-1.27"><span class="select unit"><select aria-label="zS unit"><option>mm</option></select></span>
            <label for="ze">zE</label><input id="ze" value="430.8475"><span class="select unit"><select aria-label="zE unit"><option>mm</option></select></span>
          </div>
        </div>
      </section>
    </div>
  </main>
</div>
<script src="mesh.js"></script>
</body>
</html>
```
FILE: styles.css
```css
* { box-sizing: border-box; }
html, body { height: 100%; }
body {
  margin: 0;
  display: flex;
  flex-direction: column;
  overflow: hidden;
  background: #d9d9d9;
  color: #000;
  font: 13px/16px "Liberation Sans", Arial, sans-serif;
}
button, input, select { font: inherit; color: inherit; margin: 0; padding: 0; border-radius: 0; }
button { background: none; border: 0; }
h1, h2, p, ul { margin: 0; padding: 0; }
.defs { position: absolute; width: 0; height: 0; }

/* title and menu */
.titlebar { display: flex; align-items: center; height: 24px; padding-left: 1px; gap: 2px; background: #fff; font: 12px/16px "Open Sans", sans-serif; flex: none; }
.titlebar h1 { font: inherit; flex: 1; }
.window-buttons { display: flex; padding: 0 0 4px; margin-right: -5px; }
.window-buttons button { width: 45px; display: grid; place-items: center; }
.glyph-app { font: 5px "Liberation Sans", sans-serif; }
.menubar { display: flex; gap: 12px; height: 19px; padding-left: 8px; background: #fff; border-bottom: 2px solid #f0f0f0; font: 12px/16px "Open Sans", sans-serif; flex: none; }
.menubar u { text-underline-offset: 2px; }

/* main toolbar */
.toolbar { display: flex; height: 30px; flex: none; border-bottom: 1px solid #000; }
.tool-group { display: flex; align-items: center; padding-left: 1px; border-right: 1px solid #000; }
.tool-group button { width: 26px; height: 26px; display: grid; place-items: center; }
.tool-group button.wide { width: 28px; }
.tool-group button.narrow { width: 22px; }
.tool-group svg { width: 20px; height: 20px; }
.tool-group svg.big { width: 24px; height: 22px; }
.tool-group .pressed { border: 1px solid; border-color: #808080 #fff #fff #808080; }
.tool-group .raised { border: 1px solid; border-color: #fff #000 #000 #fff; box-shadow: inset -1px -1px #808080; }
.tool-group .letter { font: bold 21px/24px "Liberation Sans", sans-serif; color: #1f63a0; -webkit-text-stroke: 1px #0f3c68; }
.grip { width: 8px; height: 20px; display: flex; flex-direction: column; align-items: center; justify-content: space-around; }
.grip.loose { width: 9px; }
.grip::before { content: "×"; font: 9px/6px "Liberation Sans", sans-serif; }
.grip::after { content: ""; width: 5px; height: 5px; border: 1px solid #000; }
.grip.flat { width: 24px; height: 14px; flex-direction: row-reverse; }
.glyph-fx { font: italic bold 12px "Liberation Serif", serif; }
.glyph-plot { font: italic bold 13px "Liberation Serif", serif; }
.glyph-id { font: 8px "Liberation Sans", sans-serif; }
.glyph-idb { font: bold 11px "Liberation Sans", sans-serif; }
.glyph-help { font: bold 13px "Liberation Sans", sans-serif; fill: #fff; }

.workspace { flex: 1; min-height: 0; display: flex; }

/* tabs */
.tabs { display: flex; align-items: flex-end; }
.tab { height: 18px; padding: 2px 7px 0 8px; border: 1px solid; border-color: #fff #808080 transparent #fff; border-bottom: 0; border-radius: 3px 3px 0 0; line-height: 16px; overflow: hidden; }
.tab.active { height: 21px; padding-bottom: 2px; background: #d9d9d9; margin-bottom: -1px; z-index: 1; }

/* project tree */
.project { width: 246px; padding: 3px 1px 0 2px; display: flex; flex-direction: column; flex: none; border-right: 1px solid #808080; }
.project .tabs { height: 20px; flex: none; }
.project .tab { padding-left: 7px; }
.tree-frame { flex: 1; min-height: 0; display: flex; margin-bottom: 23px; background: #fff; border-right: 1px solid #808080; }
.tree { flex: 1; min-width: 0; overflow: hidden; }
.tree ul { margin-left: 7px; }
.tree, .tree ul { list-style: none; }
.tree li { position: relative; }
.tree li::before { content: ""; position: absolute; left: 9px; top: 0; bottom: 0; border-left: 1px solid #808080; }
.tree li:last-child::before { bottom: auto; height: 11px; }
.row { display: flex; align-items: center; height: 21px; padding-left: 9px; white-space: nowrap; }
.row::before { content: ""; width: 12px; height: 1px; background: #808080; flex: none; }
.row svg { width: 16px; height: 16px; flex: none; }
.row span { margin-left: 5px; padding: 1px 1px 0; }
.row .selected { background: #9ddcec; }
.row .pink { color: #ff4fc0; }
.knob { position: absolute; left: 4px; top: 5px; width: 11px; height: 11px; border: 1px solid #808080; z-index: 1; background: linear-gradient(#808080, #808080) center / 7px 1px no-repeat #fff; }
.knob.plus { background: linear-gradient(#808080, #808080) center / 7px 1px no-repeat, linear-gradient(#808080, #808080) center / 1px 7px no-repeat #fff; }

/* scroll bars */
.scrollbar { width: 17px; display: flex; flex-direction: column; flex: none; }
.scrollbar button { height: 17px; border: 1px solid; border-color: #fff #555 #555 #fff; box-shadow: inset -1px -1px #a0a0a0; }
.up { background: conic-gradient(from 135deg at 50% 0, #000 90deg, transparent 0) center / 8px 4px no-repeat #ececec; }
.down { background: conic-gradient(from -45deg at 50% 100%, #000 90deg, transparent 0) center / 8px 4px no-repeat #ececec; }
.trough { flex: 1; display: flex; flex-direction: column; background: #f4f4f4; }
.thumb { flex: 1; background: #f0f0f0; border: 1px solid; border-color: #fff #808080 #808080 #fff; }
.tree-trough { padding-top: 74px; }
.log-trough { justify-content: flex-end; }
.log-trough .thumb { flex: none; height: 8px; }

/* object palette */
.object-bar { width: 27px; flex: none; }
.object-tools { width: 26px; border-right: 1px solid #000; border-bottom: 1px solid #000; }
.object-group { display: flex; flex-direction: column; align-items: center; padding-top: 1px; }
.object-group + .object-group { border-top: 1px solid #000; }
.object-group button { width: 20px; height: 20px; display: grid; place-items: center; }
.object-group svg { width: 16px; height: 16px; }
.vsplit { width: 9px; flex: none; border-left: 3px solid #fff; border-right: 4px solid #d9d9d9; background: #000; box-shadow: inset 1px 0 #d9d9d9; }

/* graphics */
.main { flex: 1; min-width: 0; display: flex; flex-direction: column; }
.viewport { position: relative; flex: 1; min-height: 0; background: linear-gradient(#6789dc, #fff); overflow: hidden; }
.scene { position: absolute; width: 100%; height: 100%; }
.labels { font: bold 14px "Liberation Sans", sans-serif; }
.axis { font: 15px "Liberation Sans", sans-serif; }
.trace { stroke: #1ee61e; }
.brand { position: absolute; right: 8px; top: 1px; display: flex; flex-direction: column; align-items: flex-end; color: #fff; font-family: "Open Sans", sans-serif; }
.brand strong { font-size: 26px; line-height: 34px; font-weight: 600; }
.brand span { font-size: 13px; line-height: 16px; }

/* mesh control */
.dialog { position: absolute; right: 12px; top: 88px; width: 413px; border: 3px solid; border-color: #fff #808080 #808080 #fff; background: #d9d9d9; }
.dialog-inner { border: 3px solid; border-color: #808080 #fff #fff #808080; }
.dialog-title { display: flex; align-items: center; gap: 2px; height: 22px; padding: 0 1px 0 7px; background: #00f; color: #fff; }
.dialog-title h2 { flex: 1; font-size: 13px; line-height: 16px; }
.dialog-title button { width: 14px; height: 14px; background: #d9d9d9; border: 1px solid; border-color: #fff #000 #000 #fff; display: grid; place-items: center; }
.counts { display: grid; grid-template-columns: 101px 92px 84px auto; padding: 6px 0 0 6px; height: 26px; }
.dialog .tabs { height: 20px; padding-left: 5px; }
.panel { margin: 0 3px; padding: 11px 15px 18px 14px; border: 1px solid; border-color: #fff #808080 #808080 #fff; }
.dialog-buttons { display: flex; gap: 4px; padding: 8px 6px 7px; }
.dialog-buttons .btn { width: 76px; height: 32px; gap: 6px; }

.opts { display: flex; align-items: center; gap: 14px; height: 22px; }
.radios { gap: 17px; }
.opt { display: inline-flex; align-items: center; gap: 7px; white-space: nowrap; }
.opt.first { height: 22px; padding-left: 3px; }
input[type=checkbox] { appearance: none; width: 12px; height: 12px; background: #fff; border: 1px solid; border-color: #808080 #fff #fff #808080; box-shadow: inset 1px 1px #000; display: grid; place-items: center; }
input[type=checkbox]:checked::before { content: ""; width: 8px; height: 8px; background: #000; clip-path: polygon(0 38%, 38% 62%, 100% 0, 100% 38%, 38% 100%, 0 75%); }
input[type=radio] { appearance: none; width: 12px; height: 12px; border-radius: 50%; background: #fff; border: 1px solid; border-color: #555 #fff #fff #555; display: grid; place-items: center; }
input[type=radio]:checked::before { content: ""; width: 4px; height: 4px; border-radius: 50%; background: #000; }

fieldset { margin: 0; padding: 7px 8px 4px 11px; border: 1px solid #808080; box-shadow: 1px 1px #fff, inset 1px 1px #fff; min-width: 0; }
fieldset + fieldset { margin-top: 1px; }
legend { padding: 0 2px; margin-left: -2px; line-height: 16px; background: #d9d9d9; }
.colors { height: 25px; gap: 10px; }
.transparency { gap: 12px; }
.swatch { width: 16px; height: 16px; border: 1px solid; border-color: #eee #000 #000 #eee; margin-top: 2px; }
.yellow { background: #ff0; }
.green { background: #090; }
.gray { background: #666; }

.slider { display: flex; flex: 1; border: 2px solid #ececec; padding: 1px; }
.slider.tall { flex-direction: column; height: 42px; padding: 2px 1px; margin-top: 1px; }
.slider output { padding-left: 24px; line-height: 19px; }
input[type=range] { appearance: none; width: 100%; height: 17px; background: #c8c8c8; border: 1px solid; border-color: #808080 #fff #fff #808080; }
input[type=range]::-webkit-slider-thumb { appearance: none; width: 30px; height: 15px; border: 1px solid; border-color: #fff #000 #000 #fff; background: linear-gradient(90deg, transparent 13px, #000 13px, #000 14px, #fff 14px, #fff 15px, transparent 15px) #d9d9d9; }

.select { display: inline-flex; background: #fff; border: 2px solid; border-color: #808080 #eee #eee #808080; box-shadow: inset 1px 1px #000; }
.select select { appearance: none; flex: 1; min-width: 0; border: 0; background: none; padding-left: 2px; }
.select::after { content: ""; width: 11px; border-right: 1px solid #000; border-bottom: 1px solid #000; background: conic-gradient(from -45deg at 50% 100%, #000 90deg, transparent 0) center / 8px 4px no-repeat #d9d9d9; }
.btn { display: inline-flex; align-items: center; justify-content: center; gap: 4px; background: #d2d2d2; border: 1px solid; border-color: #fff #000 #000 #fff; box-shadow: inset -1px -1px #808080; white-space: nowrap; }
.btn svg { width: 16px; height: 16px; flex: none; }
.btn:disabled { color: #808080; }

.location { padding: 8px 7px 5px 8px; }
.location legend { margin-left: 1px; }
.position { display: flex; align-items: center; height: 27px; gap: 8px; padding-left: 2px; }
.position label { width: 71px; }
.position .select { width: 182px; height: 25px; }
.position .btn { flex: 1; height: 26px; }
.coords { display: grid; grid-template-columns: 24px 40px 32px 40px 32px 40px 22px 47px 23px 47px; row-gap: 2px; margin-top: 3px; align-items: center; }
.coords label { padding-left: 8px; }
.coords label:nth-of-type(5n+1) { padding-left: 0; }
.coords input, .extents input { width: 100%; min-width: 0; height: 20px; border: 1px solid; border-color: #808080 #fff #fff #808080; box-shadow: inset 0 1px #000; background: #fff; text-align: right; }
.coords input.long, .extents input.long { text-align: left; }
.coords .off { color: #b0b0b0; }
.coords input:disabled { background: #ececec; color: #b4b4b4; box-shadow: none; }
.visibility { width: 137px; height: 28px; margin-top: 1px; }

/* bottom panes */
.hsplit { height: 7px; flex: none; border-top: 3px solid #d9d9d9; background: linear-gradient(#fff 2px, #d9d9d9 2px, #d9d9d9 3px, #000 3px); }
.bottom { height: 160px; flex: none; display: flex; overflow: hidden; padding-top: 4px; }
.messages { flex: 0 0 807px; display: flex; flex-direction: column; padding-right: 3px; }
.log-frame { display: flex; height: 134px; background: #fff; border-top: 2px solid #000; border-left: 2px solid #555; }
.log { flex: 1; height: 129px; margin-top: 3px; padding-left: 4px; display: flex; flex-direction: column; overflow: hidden; white-space: nowrap; }
.log p { flex: none; }
.log p:first-child { margin-top: -4px; }
.log .indent { padding-left: 56px; }
.warn { color: #f00; }
.log-actions { display: flex; align-items: center; gap: 14px; padding-left: 5px; flex: none; }
.log-actions .btn { width: 46px; height: 26px; margin-left: -4px; }
.geometry { flex: 1; display: flex; padding: 1px 0 0 3px; }
.messages + .vsplit { width: 6px; border-left-width: 2px; border-right-width: 2px; }
.geom-left { width: 192px; display: flex; flex-direction: column; align-items: flex-start; gap: 9px; }
.geom-row { display: flex; align-items: center; gap: 13px; padding-left: 3px; }
.geometry .select { width: 100px; height: 22px; }
.autoscale { width: 68px; height: 24px; }
.geom-actions { display: flex; gap: 4px; padding-left: 2px; }
.geom-actions .btn { height: 22px; padding: 0 4px 0 2px; }
.geom-right { display: flex; flex-direction: column; align-items: center; }
.extents { display: grid; grid-template-columns: 20px 61px 42px 20px 61px 42px; align-items: center; }
.extents label { background: #ffbf8f; height: 22px; line-height: 22px; padding-left: 2px; }
.extents input { height: 22px; }
.geometry .select.unit { width: 41px; height: 24px; background: #d9d9d9; box-shadow: none; border-width: 1px; }
```
FILE: mesh.js
```js
// Draws the cut-plane mesh of the cabinet as grid lines.
(function () {
  const layer = document.getElementById("mesh");
  const round = Math.round;

  function add(d, color) {
    const path = document.createElementNS("http://www.w3.org/2000/svg", "path");
    path.setAttribute("d", d);
    path.setAttribute("fill", color);
    layer.appendChild(path);
  }
  const bar = (x, y, w, h) => `M${round(x)} ${round(y)}h${w}v${h}h${-w}z`;
  const rows = (x1, x2, ys) => ys.map(y => bar(x1, y, round(x2 - x1), 1)).join("");
  function cols(x1, x2, step, y1, y2) {
    let d = "";
    for (let x = x1; x < x2; x += step) d += bar(x, y1, 1, y2 - y1);
    return d;
  }
  function range(a, b, step) {
    const out = [];
    for (let v = a; v < b; v += step) out.push(v);
    return out;
  }

  const P = 11.41, X0 = 365.3, L = 356, R = 1342;
  let g = "";
  g += rows(L, 1429, [411, 421, 431]);
  g += rows(L, R, [434, 440, 445, 448, 450, 457, 459, 462, 467, ...range(478, 620, 11)]);
  g += cols(X0, R, P, 403, 620);
  g += cols(X0 - P / 2, R, P, 434, 467);
  g += cols(X0 - P, R, P / 4, 445, 463);
  g += cols(1370, 1429, 11.9, 403, 435);
  // refinement under the lower channel
  g += cols(X0 - P / 2, 660, P, 489, 511);
  g += cols(X0 - P, 672, P / 4, 495, 506);
  g += rows(L, 685, [495, 505]);
  // refinement beside the riser
  g += cols(656, 674, P / 4, 463, 505);
  g += rows(656, 674, range(463, 505, 3));
  g += rows(651, 685, [473, 484, 495]);
  // refinement under the thick channel
  g += cols(674, 905, P / 4, 463, 467);
  g += cols(674, 913, P / 2, 463, 478);
  g += rows(674, 913, [464, 473]);
  // refinement near the junction
  g += cols(1333, 1361, 3, 403, 435);
  g += rows(1333, 1361, range(405, 435, 5));
  g += cols(1312, 1342, 3, 443, 463);
  g += cols(1324, 1350, 3, 431, 445);
  g += rows(1312, 1342, range(440, 463, 3));
  g += rows(1324, 1380, [432, 434]);
  add(g, "#009a12");

  const gray = "#666";
  let s = bar(L, 451, 970, 5) + bar(663, 452, 235, 11) + bar(L, 498, 311, 5) + bar(663, 463, 5, 40);
  s += bar(1345, 403, 7, 30) + "M1345 431H1352L1328 455H1321Z" + "M890 463H898L907 454H896Z";
  add(s, gray);

  // light dashes inside the channels
  let dots = cols(L, 1320, 4, 453, 454) + cols(664, 896, 4, 457, 458) + cols(664, 892, 4, 460, 461) + cols(L, 660, 4, 501, 502);
  add(dots, "#c4cdea");
  add(bar(L, 451, 540, 1) + bar(668, 462, 226, 1) + bar(L, 499, 307, 1) + bar(666, 463, 1, 37) + bar(1348, 403, 1, 30), "#aaa");

  // fan housing
  let f = "";
  f += cols(1343, 1354, 3, 435, 620) + rows(1342, 1354, range(436, 620, 3));
  f += bar(1350, 445, 4, 165);
  f += cols(1425, 1430, 2, 436, 620) + rows(1422, 1430, range(436, 620, 3));
  f += rows(1354, 1430, [436, 439, 441, 617, 619]) + cols(1354, 1430, 3, 436, 442) + cols(1354, 1430, 3, 617, 620);
  f += rows(1354, 1426, range(464, 598, 4)) + cols(1355, 1426, 4, 463, 598);
  f += rows(1354, 1426, [462, 463, 465, 469, 590, 594, 596]) + cols(1357, 1426, 4, 463, 470);
  f += cols(1417, 1426, 4, 470, 590) + rows(1364, 1402, range(514, 556, 2)) + cols(1364, 1402, 4, 514, 556);
  f += rows(1354, 1366, range(504, 545, 2)) + cols(1373, 1398, 4, 475, 500) + cols(1373, 1404, 4, 562, 590);
  f += "M1388 464H1405L1419 496L1404 498Z";
  f += "M1371 503L1379 504L1400 542L1421 582V590H1411L1390 556L1374 545H1363V513Z";
  f += "M1402 520L1420 545V570Z";
  add(f, gray);
  add(bar(1354, 462, 72, 2) + bar(1350, 596, 76, 1) + bar(1366, 523, 1, 1) + bar(1378, 527, 1, 1) + bar(1408, 482, 1, 1) + bar(1411, 571, 1, 1), "#009a12");
  add("M1376 505l38 84h1l-38 -84z M1380 505l40 84h1l-40 -84z M1396 466l16 30h1l-16 -30z", "#909090");
})();
```
